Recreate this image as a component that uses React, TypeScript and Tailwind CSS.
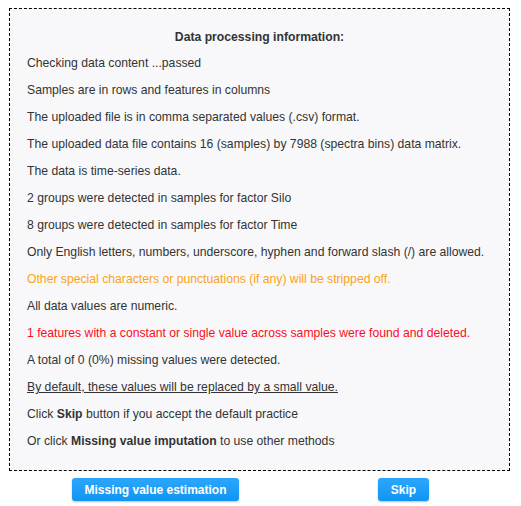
export default function App() {
  const rows: { t: React.ReactNode; c?: string }[] = [
    { t: "Checking data content ...passed" },
    { t: "Samples are in rows and features in columns" },
    { t: "The uploaded file is in comma separated values (.csv) format." },
    { t: "The uploaded data file contains 16 (samples) by 7988 (spectra bins) data matrix." },
    { t: "The data is time-series data." },
    { t: "2 groups were detected in samples for factor Silo" },
    { t: "8 groups were detected in samples for factor Time" },
    { t: "Only English letters, numbers, underscore, hyphen and forward slash (/) are allowed." },
    { t: "Other special characters or punctuations (if any) will be stripped off.", c: "text-[#f8a31c]" },
    { t: "All data values are numeric." },
    { t: "1 features with a constant or single value across samples were found and deleted.", c: "text-[#fc0d1b]" },
    { t: "A total of 0 (0%) missing values were detected." },
    { t: <span className="underline">By default, these values will be replaced by a small value.</span> },
    { t: <>Click <b>Skip</b> button if you accept the default practice</> },
    { t: <>Or click <b>Missing value imputation</b> to use other methods</> },
  ];
  return (
    <div className="w-[521px] h-[506px] bg-white text-[12.2px] text-[#333333]" style={{ fontFamily: '"Liberation Sans", Arial, sans-serif' }}>
      <div className="pt-2 pl-[9px]">
        <div className="w-[501px] border border-dashed border-black bg-[#f8f8fa] pt-[15px] pb-[15px] pl-[17px]">
          <div className="leading-[26px] font-bold text-center pr-[17px]">Data processing information:</div>
          {rows.map((r, i) => (
            <div key={i} className={`leading-[27px] whitespace-nowrap ${r.c ?? ""}`}>{r.t}</div>
          ))}
        </div>
      </div>
      <div className="flex mt-[7px]">
        <button className="ml-[72px] w-[167px] h-[23px] rounded-[3px] bg-gradient-to-b from-[#2ba6fb] to-[#0f95f3] text-white font-bold text-[12px] shadow-[0_1px_2px_rgba(0,0,0,0.25)]">Missing value estimation</button>
        <button className="ml-[139px] w-[51px] h-[23px] rounded-[3px] bg-gradient-to-b from-[#2ba6fb] to-[#0f95f3] text-white font-bold text-[12px] shadow-[0_1px_2px_rgba(0,0,0,0.25)]">Skip</button>
      </div>
    </div>
  );
}
